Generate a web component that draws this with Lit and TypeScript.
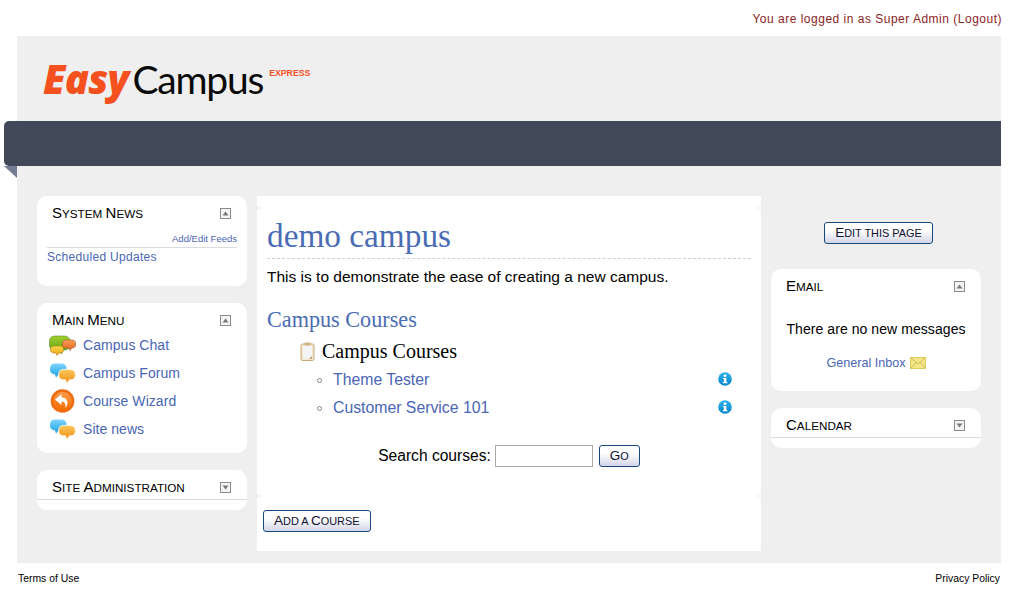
import {LitElement, html, css, svg} from 'lit';
import {customElement} from 'lit/decorators.js';

const chatIcon = svg`<svg class="ico" width="28" height="21" viewBox="0 0 28 21">
  <defs>
    <linearGradient id="cg" x1="0" y1="0" x2="0" y2="1"><stop offset="0" stop-color="#a4cf2e"/><stop offset="1" stop-color="#4f9a12"/></linearGradient>
    <linearGradient id="cy" x1="0" y1="0" x2="0" y2="1"><stop offset="0" stop-color="#fbd84a"/><stop offset="1" stop-color="#eda515"/></linearGradient>
    <linearGradient id="co" x1="0" y1="0" x2="0" y2="1"><stop offset="0" stop-color="#f9a05a"/><stop offset="1" stop-color="#e4601c"/></linearGradient>
  </defs>
  <path d="M6 1h9c3.500 0 6 2 6 5v4c0 3-2.500 5-6 5h-1l-1.500 4-3-4H6c-3.500 0-5.500-2-5.500-5V6c0-3 2-5 5.500-5z" fill="url(#cg)" stroke="#3f8a10" stroke-width=".5"/>
  <path d="M5 11h6c2 0 3.500 1.200 3.500 3v1c0 1.800-1.500 3-3.500 3h-1l-2 2.500L7 18H5c-2 0-3.500-1.200-3.500-3v-1c0-1.800 1.500-3 3.500-3z" fill="url(#cy)" stroke="#b57e18" stroke-width=".6"/>
  <path d="M17 5h6c2 0 3.500 1.200 3.500 3v2c0 1.800-1.500 3-3.500 3h-.5l-1.500 2.500-1-2.500H17c-2 0-3.500-1.200-3.500-3V8c0-1.800 1.500-3 3.500-3z" fill="url(#co)" stroke="#a9551f" stroke-width=".6"/>
</svg>`;

const forumIcon = svg`<svg class="ico" width="27" height="21" viewBox="0 0 27 21">
  <defs>
    <linearGradient id="fb" x1="0" y1="0" x2="0" y2="1"><stop offset="0" stop-color="#7fd6fb"/><stop offset="1" stop-color="#1c9fe6"/></linearGradient>
    <linearGradient id="fo" x1="0" y1="0" x2="0" y2="1"><stop offset="0" stop-color="#fcc65e"/><stop offset="1" stop-color="#f28f12"/></linearGradient>
  </defs>
  <path d="M6 .5h6.500c3 0 5 1.800 5 4.500v2c0 2.700-2 4.500-5 4.500H9.500l-2.500 3-1-3c-3-.2-5-2-5-4.500V5c0-2.700 2-4.500 5-4.500z" fill="url(#fb)"/>
  <path d="M14.500 6.500h7c2.800 0 4.800 1.700 4.800 4v2.300c0 2.300-2 4-4.800 4h-1l-2.500 3.700-1.500-3.700h-2c-2.800 0-4.800-1.700-4.800-4v-2.300c0-2.300 2-4 4.800-4z" fill="url(#fo)" stroke="#fff" stroke-width=".7"/>
</svg>`;

const wizardIcon = svg`<svg class="ico" width="26" height="24" viewBox="0 0 26 24">
  <defs>
    <linearGradient id="wz" x1="0" y1="0" x2="0" y2="1"><stop offset="0" stop-color="#f99a4c"/><stop offset="1" stop-color="#f56c00"/></linearGradient>
  </defs>
  <circle cx="13.500" cy="12" r="11.800" fill="#f06c10"/>
  <circle cx="13.500" cy="12" r="9.300" fill="url(#wz)"/>
  <path d="M12.500 5l-6.500 5.500 6.500 5.500v-3.200c2.800-.3 4.300 1.500 4 6.200 3-3.500 3.200-10.500-4-10.800z" fill="#fff"/>
</svg>`;

const clipboardIcon = svg`<svg class="clip" width="15" height="19" viewBox="0 0 15 19">
  <rect x="1" y="2" width="13" height="16.500" rx="1.500" fill="#f1e6d2" stroke="#c9a877"/>
  <rect x="3" y="4" width="9" height="12.500" fill="#f4f4f7"/>
  <rect x="4.500" y=".5" width="6" height="3" rx="1" fill="#d3b483"/>
  <path d="M9 16.500l3-2v2z" fill="#a98048"/>
</svg>`;

const infoIcon = svg`<svg width="14" height="14" viewBox="0 0 15 15">
  <defs>
    <linearGradient id="inf" x1="0" y1="0" x2="0" y2="1"><stop offset="0" stop-color="#2fb2ee"/><stop offset="1" stop-color="#0585c9"/></linearGradient>
  </defs>
  <circle cx="7.500" cy="7.500" r="7.300" fill="url(#inf)"/>
  <rect x="6" y="2.800" width="3" height="2.500" rx="1" fill="#fff"/>
  <path d="M5.300 6.300h3.700v4.500h1v1.300H5.300v-1.300h1V7.600h-1z" fill="#fff"/>
</svg>`;

const mailIcon = svg`<svg class="mail" width="16" height="12" viewBox="0 0 16 12">
  <rect x=".5" y=".5" width="15" height="11" fill="#f3e68a" stroke="#dccb58"/>
  <path d="M1 1l7 6 7-6M1 11l5-5.500M15 11l-5-5.500" fill="none" stroke="#cfbd4c"/>
</svg>`;

function toggle(open: boolean) {
  return svg`<svg class="toggle" width="11" height="11" viewBox="0 0 11 11">
    <rect x=".5" y=".5" width="10" height="10" fill="#f4f4f4" stroke="#8a8a8a"/>
    <path d="${open ? 'M2.500 7.500L5.500 3.500l3 4z' : 'M2.500 3.500l3 4 3-4z'}" fill="#777"/>
  </svg>`;
}

// Capitals stay full size, everything else is upper-cased a little smaller.
function smallCaps(text: string) {
  return text.split(/([A-Z])/).filter(Boolean).map((part) =>
    /^[A-Z]$/.test(part) ? part : html`<span class="sc">${part}</span>`);
}

@customElement('side-block')
export class SideBlock extends LitElement {
  static properties = {
    heading: {type: String},
    open: {type: Boolean},
  };

  declare heading: string;
  declare open: boolean;

  static styles = css`
    :host {
      display: block;
      background: #fff;
      border-radius: 10px;
      font-family: 'Liberation Sans', Arial, sans-serif;
    }
    .head {
      display: flex;
      align-items: center;
      justify-content: space-between;
      height: 32px;
      padding: 0 16px 0 15px;
      box-sizing: border-box;
      font-size: 15px;
      color: #000;
    }
    .sc {
      font-size: .78em;
      text-transform: uppercase;
    }
    .head.closed {
      border-bottom: 1px solid #dcdcdc;
      height: 30px;
      padding-top: 3px;
    }
    .closed + .body {
      height: 10px;
    }
    .toggle {
      display: block;
      margin-top: 2px;
    }
  `;

  render() {
    return html`
      <div class="head ${this.open ? '' : 'closed'}">
        <span>${smallCaps(this.heading)}</span>${toggle(this.open)}
      </div>
      <div class="body"><slot></slot></div>
    `;
  }
}

@customElement('app-root')
export class AppRoot extends LitElement {
  static styles = css`
    :host {
      display: block;
      width: 1013px;
      height: 600px;
      background: #fff;
      font-family: 'Liberation Sans', Arial, sans-serif;
      font-size: 14px;
      overflow: hidden;
    }
    a {
      color: #4a66b4;
      text-decoration: none;
    }
    .login {
      height: 36px;
      box-sizing: border-box;
      padding: 12px 11px 0 0;
      text-align: right;
      font-size: 12px;
      letter-spacing: .5px;
      color: #8c2323;
    }
    .login a {
      color: inherit;
    }
    .page {
      margin: 0 12px 0 17px;
      height: 527px;
      background: #efefef;
    }
    .logo {
      height: 85px;
      box-sizing: border-box;
      padding: 18px 0 0 26px;
      display: flex;
      align-items: flex-start;
      white-space: nowrap;
    }
    .easy {
      font-family: 'Open Sans', sans-serif;
      font-size: 40px;
      line-height: 50px;
      font-weight: 800;
      font-style: italic;
      letter-spacing: -.8px;
      color: #f4511e;
    }
    .campus {
      font-family: Lato, sans-serif;
      font-size: 39px;
      line-height: 50px;
      letter-spacing: -1.200px;
      color: #0a0a0a;
      margin-left: 4px;
    }
    .express {
      font-family: 'Liberation Sans', sans-serif;
      font-size: 8.700px;
      font-weight: 700;
      color: #f4511e;
      margin: 14px 0 0 6px;
    }
    .bar {
      position: relative;
      margin-left: -13px;
      height: 45px;
      background: #414959;
      border-radius: 5px 0 0 5px;
    }
    .bar::after {
      content: '';
      position: absolute;
      left: 0;
      top: 45px;
      border-top: 12px solid #757d94;
      border-left: 13px solid transparent;
    }
    .cols {
      display: grid;
      grid-template-columns: 210px 504px 210px;
      column-gap: 10px;
      padding: 30px 0 0 20px;
    }
    .stack {
      display: flex;
      flex-direction: column;
      gap: 17px;
    }
    .feeds {
      margin: 3px 10px 0;
      padding: 2px 0;
      text-align: right;
      font-size: 9.500px;
      border-bottom: 1px solid #dcdcdc;
      line-height: 12px;
    }
    .news {
      display: block;
      box-sizing: border-box;
      margin: 0 10px;
      padding-top: 1px;
      height: 38px;
      line-height: 16px;
      font-size: 12px;
      letter-spacing: .3px;
    }
    .menu {
      list-style: none;
      margin: -4px 0 0;
      padding: 0 0 10px 12px;
    }
    .menu li {
      display: flex;
      align-items: center;
      height: 28px;
      font-size: 14px;
      letter-spacing: .05px;
    }
    .ico-wrap {
      width: 34px;
      display: flex;
      align-items: center;
    }
    .ico {
      display: block;
    }
    .main {
      position: relative;
      background: #fff;
      height: 355px;
    }
    .main::before,
    .main::after {
      content: '';
      position: absolute;
      left: 0;
      right: 0;
      height: 2px;
      background: linear-gradient(90deg, #efefef 3px, transparent 3px, transparent calc(100% - 3px), #efefef calc(100% - 3px));
    }
    .main::before {
      top: 11px;
    }
    .main::after {
      top: 299px;
    }
    .inner {
      padding: 0 10px;
      height: 301px;
    }
    h1 {
      margin: 0;
      padding-top: 20px;
      height: 42px;
      font: 400 33.300px/40px 'Liberation Serif', serif;
      color: #4a6cb4;
      border-bottom: 1px dashed #cfcfcf;
    }
    .lead {
      margin: 8px 0 0;
      font-size: 15.500px;
      line-height: 20px;
      color: #000;
    }
    h2 {
      margin: 20px 0 0;
      font: 400 22.200px/26px 'Liberation Serif', serif;
      color: #4a6cb4;
    }
    .cat {
      display: flex;
      align-items: center;
      gap: 7px;
      margin: 5px 0 0 33px;
      height: 26px;
      font: 400 20px/26px 'Liberation Serif', serif;
      color: #000;
    }
    .clip {
      display: block;
    }
    .courses {
      list-style: none;
      margin: 2px 19px 0 50px;
      padding: 0;
    }
    .courses li {
      position: relative;
      display: flex;
      align-items: center;
      justify-content: space-between;
      height: 28px;
      padding-left: 16px;
      font-size: 15.800px;
    }
    .courses li::before {
      content: '';
      position: absolute;
      left: 0;
      top: 12px;
      width: 3px;
      height: 3px;
      border: 1px solid #8a8a8a;
      border-radius: 50%;
    }
    .courses svg {
      display: block;
      margin-bottom: 2px;
    }
    .search {
      display: flex;
      align-items: center;
      justify-content: center;
      gap: 6px;
      margin-top: 23px;
      font-size: 15.600px;
      color: #000;
    }
    .search input {
      width: 98px;
      height: 22px;
      box-sizing: border-box;
      border: 1px solid #a9a9a9;
      background: #fff;
      margin: 0 0 0 -2px;
    }
    .btn {
      box-sizing: border-box;
      height: 22px;
      padding: 0 10px;
      border: 1px solid #16497f;
      border-radius: 3px;
      background: linear-gradient(#fff, #fff 35%, #d3d5e6);
      font-family: 'Liberation Sans', Arial, sans-serif;
      font-size: 13.500px;
      color: #101030;
      line-height: 18px;
    }
    .sc {
      font-size: .81em;
      text-transform: uppercase;
    }
    .add {
      margin: 13px 0 0 6px;
      display: block;
    }
    .edit-row {
      display: flex;
      justify-content: center;
      padding: 26px 0 0 5px;
      height: 47px;
    }
    .right .stack-top {
      margin-bottom: -17px;
    }
    .none {
      margin: 19px 0 0;
      text-align: center;
      font-size: 14px;
      letter-spacing: .07px;
      line-height: 18px;
      color: #000;
    }
    .inbox {
      display: flex;
      justify-content: center;
      align-items: center;
      gap: 4px;
      margin-top: 17px;
      padding-bottom: 20px;
      font-size: 12.600px;
      line-height: 16px;
    }
    .mail {
      display: block;
    }
    .foot {
      display: flex;
      justify-content: space-between;
      padding: 10px 13px 0 18px;
      font-size: 10.400px;
      line-height: 12px;
    }
    .foot a {
      color: #000;
    }
  `;

  render() {
    return html`
      <div class="login">You are logged in as Super Admin (<a href="#">Logout</a>)</div>
      <div class="page">
        <div class="logo">
          <span class="easy">Easy</span><span class="campus">Campus</span><span class="express">EXPRESS</span>
        </div>
        <div class="bar"></div>
        <div class="cols">
          <div class="stack">
            <side-block heading="System News" open>
              <div class="feeds"><a href="#">Add/Edit Feeds</a></div>
              <a class="news" href="#">Scheduled Updates</a>
            </side-block>
            <side-block heading="Main Menu" open>
              <ul class="menu">
                <li><span class="ico-wrap">${chatIcon}</span><a href="#">Campus Chat</a></li>
                <li><span class="ico-wrap">${forumIcon}</span><a href="#">Campus Forum</a></li>
                <li><span class="ico-wrap">${wizardIcon}</span><a href="#">Course Wizard</a></li>
                <li><span class="ico-wrap">${forumIcon}</span><a href="#">Site news</a></li>
              </ul>
            </side-block>
            <side-block heading="Site Administration"></side-block>
          </div>
          <div class="main">
            <div class="inner">
              <h1>demo campus</h1>
              <p class="lead">This is to demonstrate the ease of creating a new campus.</p>
              <h2>Campus Courses</h2>
              <div class="cat">${clipboardIcon}<span>Campus Courses</span></div>
              <ul class="courses">
                <li><a href="#">Theme Tester</a>${infoIcon}</li>
                <li><a href="#">Customer Service 101</a>${infoIcon}</li>
              </ul>
              <div class="search">
                <label>Search courses:</label>
                <input type="text" />
                <button class="btn">${smallCaps('Go')}</button>
              </div>
            </div>
            <button class="btn add">${smallCaps('Add a Course')}</button>
          </div>
          <div class="stack right">
            <div class="edit-row stack-top"><button class="btn">${smallCaps('Edit this page')}</button></div>
            <side-block heading="Email" open>
              <p class="none">There are no new messages</p>
              <div class="inbox"><a href="#">General Inbox</a>${mailIcon}</div>
            </side-block>
            <side-block heading="Calendar"></side-block>
          </div>
        </div>
      </div>
      <div class="foot"><a href="#">Terms of Use</a><a href="#">Privacy Policy</a></div>
    `;
  }
}
